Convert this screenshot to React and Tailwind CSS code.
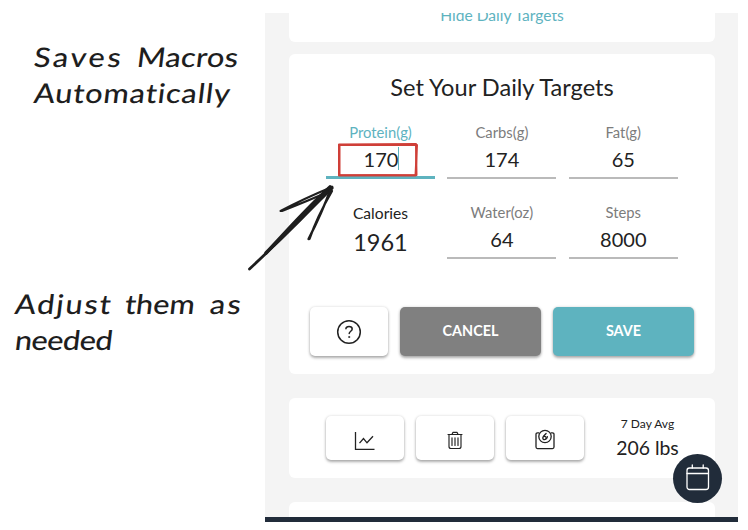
const raised = "shadow-[0_2px_3px_rgba(0,0,0,0.3),0_0_3px_rgba(0,0,0,0.14)]";

function Note({ className, lines }) {
  return (
    <div className={`font-['Lato','Noto_Sans',sans-serif] text-[27px] leading-[36px] font-medium text-[#1e1e1e] ${className}`}>
      {lines.map((line, i) => (
        <div key={i} className="flex whitespace-nowrap">
          {line.map(([word, width, tracking]) => (
            <span key={word} className={`${width} shrink-0`}>
              <span className={`inline-block origin-bottom-left scale-x-[1.14] -skew-x-6 ${tracking}`}>{word}</span>
            </span>
          ))}
        </div>
      ))}
    </div>
  );
}

function Field({ label, value, active }) {
  return (
    <div className={`relative h-[59px] text-center ${active ? "mt-px border-b-[3px] border-[#5eb3bf]" : "mt-px border-b-2 border-[#bababa]"}`}>
      <div className={`h-[23px] text-[14.8px] leading-6 ${active ? "text-[#5eb3bf]" : "text-[#7c7c7c]"}`}>{label}</div>
      <div className="flex h-8 items-center justify-center text-[20px] leading-8 text-[#222]">
        {value}
        {active && <span className="-mr-0.5 h-[23px] w-px bg-[#5eb3bf]" />}
      </div>
      {active && (
        <svg className="absolute top-[22px] left-[11px]" width="82" height="36" fill="none" stroke="#cf3f38" strokeWidth="2" strokeLinecap="round" strokeLinejoin="round">
          <path d="M2 2.500 L79 2 L79.500 33 L2 33.500 Z" />
          <path d="M2.500 3 L80 3 L78.500 33.500 L2.500 33 Z" />
        </svg>
      )}
    </div>
  );
}

function IconButton({ children, className }) {
  return <button className={`flex w-[78px] items-center justify-center rounded-[5px] bg-white text-[#222] ${raised} ${className}`}>{children}</button>;
}

export default function App() {
  return (
    <div className="relative flex h-[530px] w-[748px] overflow-hidden bg-white pt-[13px] font-['Lato',sans-serif]">
      <aside className="w-[265px] shrink-0">
        <Note className="mt-[26px] pl-[32px]" lines={[[["Saves", "w-[103px]", "tracking-[2.2px]"], ["Macros", "w-[103px]", "tracking-[0.2px]"]], [["Automatically", "w-[200px]", "tracking-[0.7px]"]]]} />
        <Note className="mt-[175px] pl-[13px]" lines={[[["Adjust", "w-[110px]", "tracking-[1.5px]"], ["them", "w-[85px]", "tracking-[0px]"], ["as", "w-[36px]", "tracking-[2px]"]], [["needed", "w-[100px]", "tracking-[-0.5px]"]]]} />
      </aside>

      <main className="flex h-[509px] w-[473px] flex-col overflow-hidden border-b-[5px] border-[#212c3a] bg-[#f4f4f4] px-6">
        <section className="h-[29px] w-[426px] shrink-0 overflow-hidden rounded-b-md bg-white text-center">
          <div className="-mt-[10px] text-[15.6px] leading-6 text-[#5eb3bf]">Hide Daily Targets</div>
        </section>

        <section className="mt-3 h-[320px] w-[426px] shrink-0 rounded-md bg-white pt-[15px]">
          <h1 className="text-center text-[23.6px] leading-9 text-[#222]">Set Your Daily Targets</h1>
          <div className="mt-[13.5px] ml-[37px] grid w-[353px] grid-cols-[109px_109px_109px] gap-x-[12.400px] gap-y-[20px]">
            <Field label="Protein(g)" value="170" active />
            <Field label="Carbs(g)" value="174" />
            <Field label="Fat(g)" value="65" />
            <div className="text-center text-[#222]">
              <div className="mt-0.5 h-6 text-[15.6px] leading-6">Calories</div>
              <div className="text-[23.5px] leading-[34px]">1961</div>
            </div>
            <Field label="Water(oz)" value="64" />
            <Field label="Steps" value="8000" />
          </div>
          <div className="mt-[48.5px] ml-[21px] flex h-[48.5px] gap-3 text-[14.4px] font-bold text-white">
            <IconButton className="">
              <svg width="26" height="26" viewBox="0 0 26 26" fill="none" stroke="currentColor" strokeWidth="1.5" strokeLinecap="round" className="mt-0.5">
                <circle cx="13" cy="13" r="11.3" />
                <path d="M9.900 9.700c.2-1.500 1.400-2.200 3.100-2.200 1.800 0 3.200.9 3.200 2.500 0 2.200-3 2.300-3 4.600" />
                <circle cx="13.1" cy="18" r=".6" fill="currentColor" strokeWidth=".7" />
              </svg>
            </IconButton>
            <button className={`w-[141px] rounded-[5px] bg-[#808080] pb-px ${raised}`}>CANCEL</button>
            <button className={`w-[141px] rounded-[5px] bg-[#5eb3bf] pb-px ${raised}`}>SAVE</button>
          </div>
        </section>

        <section className="mt-[24px] flex h-20 w-[426px] shrink-0 gap-3 rounded-md bg-white pt-[18px] pl-[37px]">
          <IconButton className="h-11">
            <svg width="22" height="20" viewBox="0 0 22 20" fill="none" stroke="currentColor" strokeWidth="1.3" className="mt-1.5">
              <path d="M1.500 1v17.300H20.500M5.500 12.200l4-4.700 3.500 4.300 6-6.600" />
            </svg>
          </IconButton>
          <IconButton className="h-11">
            <svg width="16" height="19" viewBox="0 0 16 19" fill="none" stroke="currentColor" strokeWidth="1.15" strokeLinecap="round" strokeLinejoin="round" className="mt-1">
              <path d="M1 3.500h14M5 3.200l1-1.800h4l1 1.800M2 3.500v12c0 1.300.8 2 2 2h8c1.200 0 2-.7 2-2v-12M5 6.800v7.700M8 6.800v7.700M11 6.800v7.700" />
            </svg>
          </IconButton>
          <IconButton className="h-11">
            <svg width="20" height="22" viewBox="0 0 20 22" fill="none" stroke="currentColor" strokeWidth="1.3" strokeLinecap="round" strokeLinejoin="round" className="mt-1">
              <path d="M3.800 3.800H2.500Q1 3.800 1 5.300v12.800Q1 19.600 2.500 19.600h15q1.500 0 1.500-1.500V5.300q0-1.500-1.500-1.500h-1.300" />
              <circle cx="10" cy="7.500" r="6.2" />
              <circle cx="9.500" cy="9" r="1.700" />
              <path d="M8.500 7.300l2.600-2.800M11.200 9.600q1.200-.4 1.200-2" />
            </svg>
          </IconButton>
          <div className="-ml-[6px] w-[115px] text-center text-[#222]">
            <div className="-mt-[2px] text-[12px] leading-5">7 Day Avg</div>
            <div className="-mt-px text-[19.4px] leading-[30px]">206 lbs</div>
          </div>
        </section>

        <section className="mt-6 h-10 w-[426px] shrink-0 rounded-md bg-white" />
      </main>

      <button className="absolute top-[454px] left-[673px] flex size-[49px] items-center justify-center rounded-full bg-[#212c3a]">
        <svg width="24" height="27" viewBox="0 0 24 27" fill="none" stroke="white" strokeWidth="1.3" strokeLinecap="round" className="-mt-0.5">
          <rect x="1" y="4" width="21.500" height="21.500" rx="2.500" />
          <path d="M1 9.500h21.500M6.300 1v3M17.200 1v3" />
        </svg>
      </button>

      <svg className="absolute top-[179px] left-[244px]" width="95" height="94" fill="none" stroke="#1e1e1e" strokeLinecap="round" strokeLinejoin="round">
        <path d="M5.500 90 C30 67 57 41 88 8" strokeWidth="2.800" />
        <path d="M22 74 C42 53 62 30 86 8" strokeWidth="3.600" />
        <path d="M30 66 C50 47 68 28 88 9" strokeWidth="3.200" />
        <path d="M36.500 32 Q59 20 88 8 M38 32 Q66 21 86 12" strokeWidth="2" />
        <path d="M64.500 60 Q78 34 87 9 M65.500 60 Q73 38 88 12" strokeWidth="2.300" />
      </svg>
    </div>
  );
}
